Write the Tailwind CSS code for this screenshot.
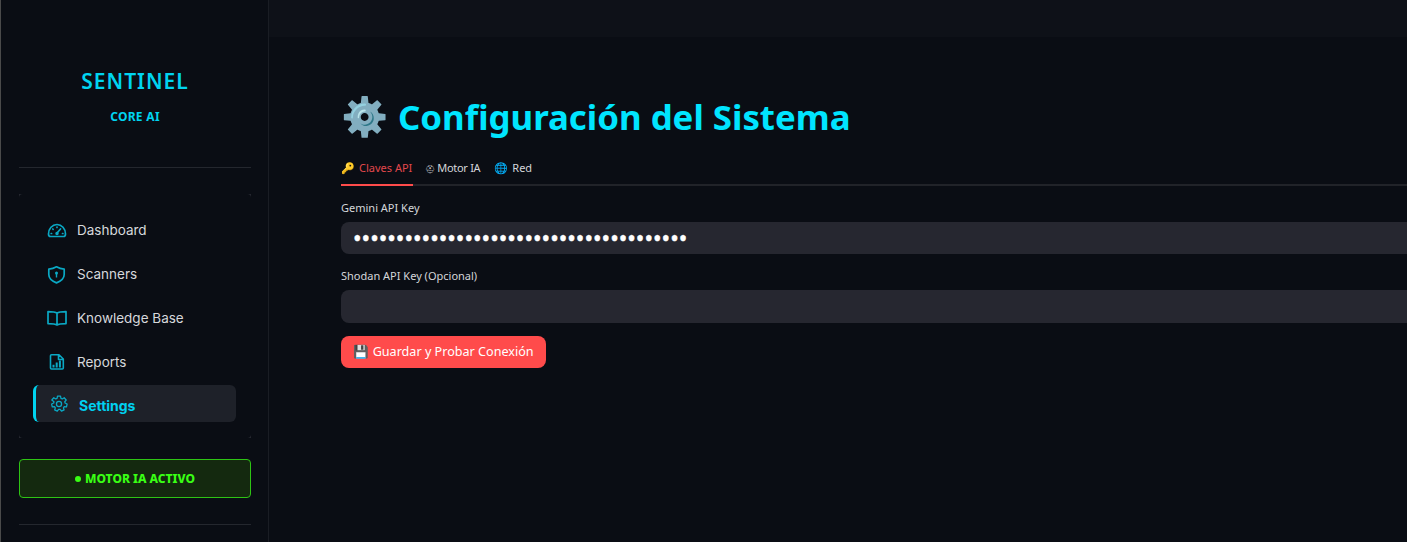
<!DOCTYPE html>
<html lang="es">
<head>
	<meta charset="UTF-8">
	<title>Sentinel Core AI</title>
	<script src="https://cdn.jsdelivr.net/npm/@tailwindcss/browser@4"></script>
</head>
<body class="h-[542px] overflow-hidden flex bg-[#0a0d14] font-['Noto_Sans',sans-serif]">

	<!-- Sidebar -->
	<aside class="w-[269px] h-full shrink-0 bg-[#0a0d14] border-l border-l-[#4a4a4a] border-r border-r-[#1a1d24] pl-[18px] pr-[17px]">
		<div class="pt-[68px] text-center">
			<h1 class="text-[21px] leading-[26px] font-semibold tracking-[1px] text-[#00d4f0]">SENTINEL</h1>
			<p class="mt-[15px] text-[12px] leading-[16px] font-bold tracking-[0.3px] text-[#00d4f0]">CORE AI</p>
		</div>
		<hr class="mt-[42px] border-[#24272e]">

		<!-- Nav -->
		<div class="mt-[26px] bg-[#262830]">
			<nav class="h-[244px] rounded-[4px] bg-[#0a0d14] pt-[18px] pl-[14px] pr-[15px] flex flex-col gap-[7px] font-['Inter',sans-serif] text-[13.5px] text-[#d6d8dc]">
				<a class="h-[37px] flex items-center gap-[10px] pl-[14px]">
					<svg class="w-[20px] h-[20px] text-[#0aa8c4]" viewBox="0 0 20 20" fill="none" stroke="currentColor" stroke-width="1.700" stroke-linecap="round" stroke-linejoin="round"><path d="M3.500 15.500h13c1 0 2-.8 2-2.500C18.500 7.800 14.700 3.500 10 3.500S1.500 7.800 1.500 13c0 1.700 1 2.500 2 2.500z"/><path d="M10 12l3.500-4M10 6.200v.3M5.800 8l.3.3M4.200 12.500h.4M15.500 12.500h.4"/><circle cx="10" cy="12.500" r=".9"/></svg>
					<span>Dashboard</span>
				</a>
				<a class="h-[37px] flex items-center gap-[10px] pl-[14px]">
					<svg class="w-[20px] h-[20px] text-[#0aa8c4]" viewBox="0 0 20 20" fill="none" stroke="currentColor" stroke-width="1.700" stroke-linejoin="round"><path d="M9.500 1.800c2.800 1.700 5 2.200 7.700 2.400v5.300c0 3.800-3 6.500-7.700 8.400-4.700-1.900-7.700-4.600-7.700-8.400V4.200c2.700-.2 4.900-.7 7.700-2.400z"/><circle cx="9.500" cy="8" r="1.500" fill="currentColor" stroke="none"/><path d="M9.500 8.500v4" stroke-width="1.400"/></svg>
					<span>Scanners</span>
				</a>
				<a class="h-[37px] flex items-center gap-[10px] pl-[14px]">
					<svg class="w-[20px] h-[20px] text-[#0aa8c4]" viewBox="0 0 20 20" fill="none" stroke="currentColor" stroke-width="1.700" stroke-linejoin="round"><path d="M10 4.200C8.200 2.800 5 2.600 1 2.600v12c4 0 7.200.1 9 1.400 1.800-1.300 5-1.400 9-1.400v-12c-4 0-7.200.2-9 1.600zM10 4.200V16"/></svg>
					<span>Knowledge Base</span>
				</a>
				<a class="h-[37px] flex items-center gap-[10px] pl-[14px]">
					<svg class="w-[20px] h-[20px] text-[#0aa8c4]" viewBox="0 0 20 20" fill="none" stroke="currentColor" stroke-width="1.600" stroke-linejoin="round"><path d="M4.500 1.700h7.500l4.300 4.300v9a1 1 0 0 1-1 1H4.500a1 1 0 0 1-1-1V2.700a1 1 0 0 1 1-1zM11.500 1.700v4.800h4.800"/><path d="M5.500 11.800h2v2.700h-2zM8.700 9.500h2v5h-2zM11.900 7.500h2v7h-2z" fill="currentColor" stroke="none"/></svg>
					<span>Reports</span>
				</a>
				<a class="h-[37px] -mt-[3px] flex items-center gap-[11px] pl-[14px] rounded-[6px] bg-[#1e2129] border-l-[3px] border-[#00d4f0] font-bold text-[#00d0f0]">
					<svg class="w-[18px] h-[18px] mt-[1px] text-[#0aa8c4]" viewBox="0 0 24 24" fill="none" stroke="currentColor" stroke-width="1.700" stroke-linejoin="round"><path d="M10 1.500h4l.6 3 1.800.8 2.500-1.600 2.700 3-1.900 2.300.4 1.700 2.700 1.300-.8 3.700-3-.1-1.100 1.500.9 2.800-3.500 1.600-1.800-2.400h-2l-1.800 2.400-3.500-1.600.9-2.800-1.100-1.500-3 .1-.8-3.700 2.700-1.300.4-1.700L2.400 6.700l2.700-3 2.500 1.600 1.800-.8z"/><circle cx="12" cy="12" r="3.400"/></svg>
					<span class="mt-[3px] text-[14px]">Settings</span>
				</a>
			</nav>
		</div>

		<!-- Status -->
		<div class="mt-[21px] h-[39px] rounded-[4px] border border-[#2ec414] bg-[#14290f] flex items-center justify-center gap-[4px] text-[12px] font-extrabold text-[#39ff14]">
			<span class="w-[6px] h-[6px] rounded-full bg-[#39ff14]"></span>
			<span>MOTOR IA ACTIVO</span>
		</div>
		<hr class="mt-[26px] border-[#24272e]">
	</aside>

	<!-- Main -->
	<main class="flex-1 min-w-0">
		<div class="h-[37px] bg-[#0e1118]"></div>
		<div class="pl-[72px] pt-[53px]">
			<h2 class="h-[54px] flex items-center gap-[10px] text-[34.800px] font-bold text-[#00e5ff]">
				<span class="text-[38px] leading-none -mt-[4px]">⚙️</span><span>Configuración del Sistema</span>
			</h2>
			<div class="mt-[9px] h-[33px] border-b-2 border-[#212329] flex gap-[14px] text-[11px]">
				<div class="h-[33px] pr-[1px] border-b-2 border-[#ff4b4b] text-[#e2484c] flex items-center gap-[4px]"><span>🔑</span><span>Claves API</span></div>
				<div class="-ml-[2px] text-[#d4d6da] flex items-center gap-[2px]"><span class="text-[8px]">⛑</span><span class="tracking-[-0.3px]">Motor IA</span></div>
				<div class="text-[#d4d6da] flex items-center gap-[4px]"><span>🌐</span><span>Red</span></div>
			</div>
			<label class="block mt-[14px] text-[11px] leading-[16px] text-[#d4d6da]">Gemini API Key</label>
			<input type="password" value="aaaaaaaaaaaaaaaaaaaaaaaaaaaaaaaaaaaaaaa" class="block mt-[6px] w-full h-[32px] pt-[3px] px-[12px] rounded-l-[8px] bg-[#262730] text-[22.800px] [-webkit-text-stroke:0.5px_white] text-white outline-none">
			<label class="block mt-[14px] text-[11px] leading-[16px] text-[#d4d6da]">Shodan API Key (Opcional)</label>
			<input type="password" class="block mt-[6px] w-full h-[33px] px-[12px] rounded-l-[8px] bg-[#262730] text-[14px] text-white outline-none">
			<button class="mt-[13px] h-[32px] w-[205px] rounded-[8px] bg-[#ff4b4b] text-[12.600px] text-white">💾 Guardar y Probar Conexión</button>
		</div>
	</main>
</body>
</html>
